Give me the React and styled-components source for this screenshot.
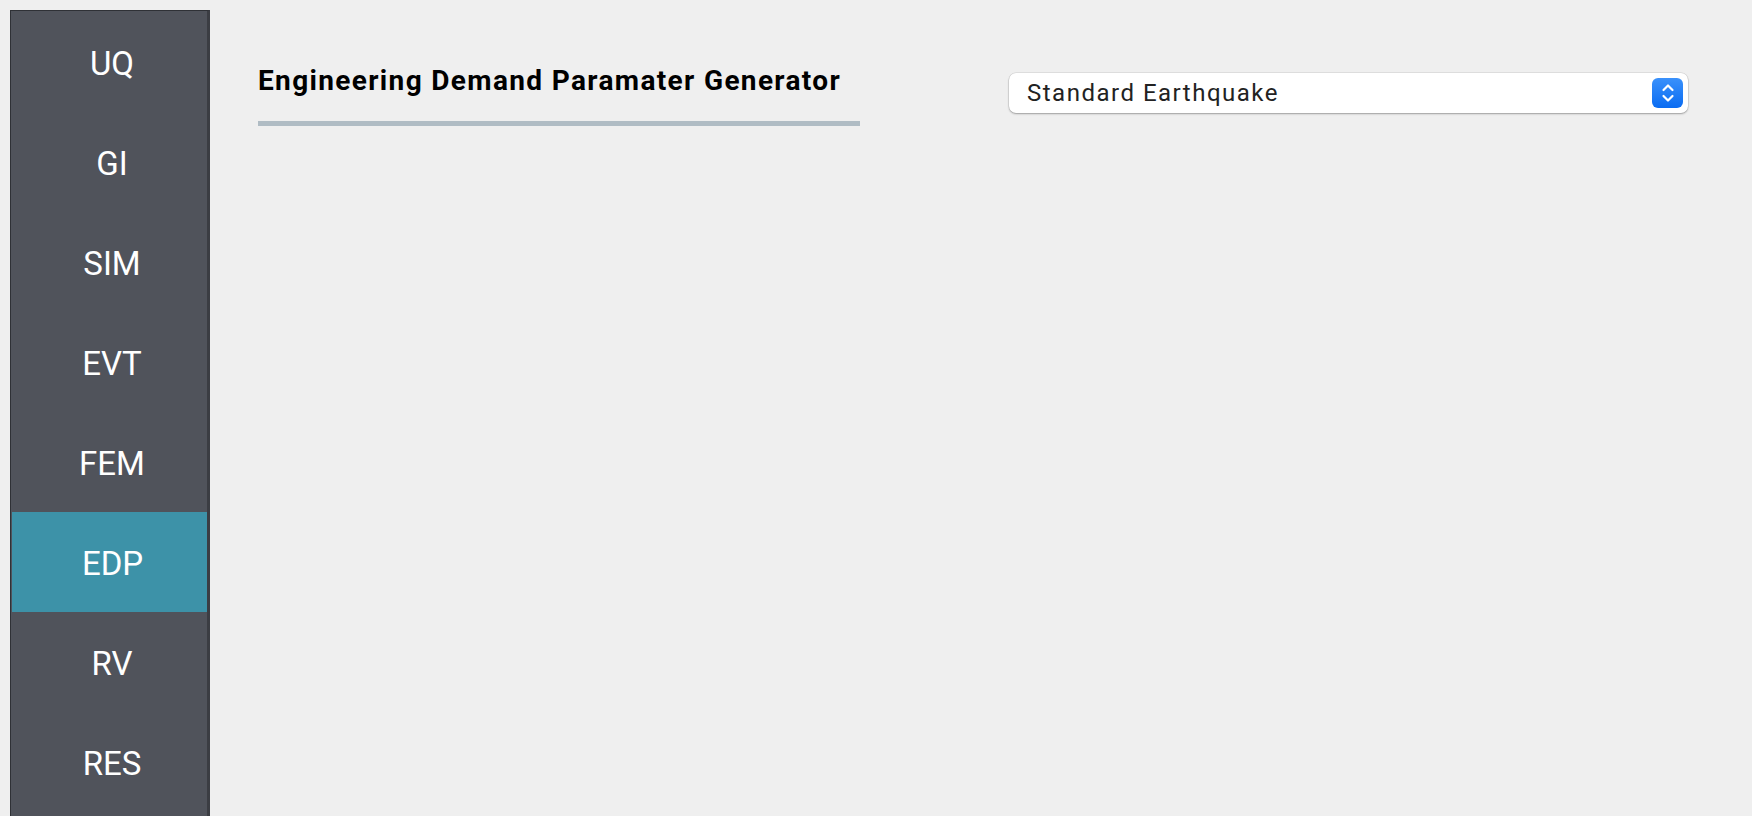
import styled, { createGlobalStyle } from "styled-components";

const Global = createGlobalStyle`
  html, body {
    margin: 0;
    padding: 0;
    background: #efefef;
    font-family: Roboto, "Liberation Sans", sans-serif;
    overflow: hidden;
  }
`;

const Page = styled.div`
  display: flex;
  height: 816px;
  padding: 10px 0 0 10px;
  box-sizing: border-box;
`;

const SideBar = styled.nav`
  width: 200px;
  flex-shrink: 0;
  height: 830px;
  background: #50535b;
  border-top: 1px solid #2f3136;
  border-left: 1px solid #2f3136;
  border-right: 3px solid #3b3d43;
  padding-top: 1px;
  box-sizing: border-box;
  display: flex;
  flex-direction: column;
`;

const NavItem = styled.div`
  height: 100px;
  display: flex;
  align-items: center;
  justify-content: center;
  padding: 2px 0 0 6px;
  box-sizing: border-box;
  color: #ffffff;
  font-size: 33px;
  background: ${(p) => (p.$active ? "#3d92a8" : "transparent")};
  margin-left: ${(p) => (p.$active ? "1px" : "0")};
`;

const Main = styled.main`
  flex: 1;
  display: grid;
  grid-template-columns: 602px 679px;
  column-gap: 149px;
  align-items: start;
  padding: 45px 0 0 48px;
`;

const HeadBlock = styled.div`
  display: flex;
  flex-direction: column;
`;

const Title = styled.h1`
  margin: 12px 0 0;
  font-size: 28px;
  line-height: 28px;
  letter-spacing: 1.35px;
  font-weight: 700;
  color: #000;
  white-space: nowrap;
`;

const Rule = styled.div`
  height: 5px;
  margin-top: 26px;
  background: #b0bcc4;
`;

const Select = styled.div`
  margin-top: 18px;
  height: 40px;
  background: #fff;
  border-radius: 7px;
  box-shadow: 0 0 0 0.5px rgba(0, 0, 0, 0.12), 0 1px 2px rgba(0, 0, 0, 0.3);
  display: flex;
  align-items: center;
  justify-content: space-between;
  padding: 0 5px 0 18px;
  box-sizing: border-box;
`;

const SelectText = styled.span`
  font-size: 24px;
  letter-spacing: 1.5px;
  color: #222;
`;

const Stepper = styled.div`
  width: 31px;
  height: 30px;
  border-radius: 6px;
  background: linear-gradient(#3a91fb, #0a6cf2);
  display: flex;
  align-items: center;
  justify-content: center;
`;

const items = ["UQ", "GI", "SIM", "EVT", "FEM", "EDP", "RV", "RES"];

export default function App() {
  return (
    <>
      <Global />
      <Page>
        <SideBar>
          {items.map((it) => (
            <NavItem key={it} $active={it === "EDP"}>
              {it}
            </NavItem>
          ))}
        </SideBar>
        <Main>
          <HeadBlock>
            <Title>Engineering Demand Paramater Generator</Title>
            <Rule />
          </HeadBlock>
          <Select>
            <SelectText>Standard Earthquake</SelectText>
            <Stepper>
              <svg width="14" height="22" viewBox="0 0 14 22" fill="none">
                <path d="M2.5 8 L7 3.5 L11.5 8" stroke="#fff" strokeWidth="2.2" strokeLinecap="round" strokeLinejoin="round" />
                <path d="M2.5 14 L7 18.5 L11.5 14" stroke="#fff" strokeWidth="2.2" strokeLinecap="round" strokeLinejoin="round" />
              </svg>
            </Stepper>
          </Select>
        </Main>
      </Page>
    </>
  );
}
